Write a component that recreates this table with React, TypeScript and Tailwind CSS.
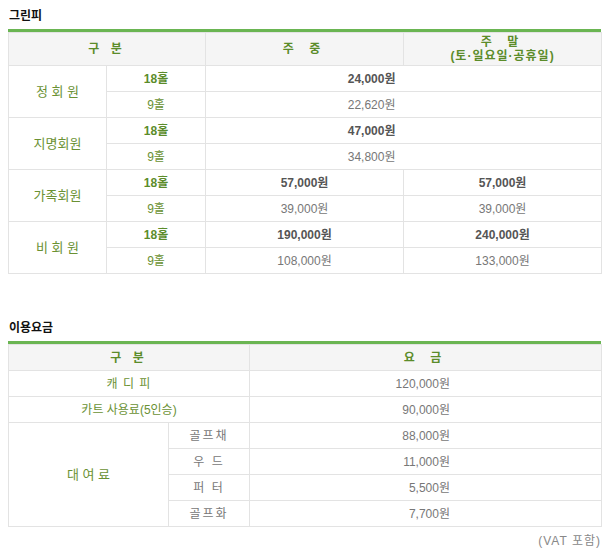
const font = "font-['Liberation_Sans','Noto_Sans_CJK_KR',sans-serif]"

const td = 'border border-[#e3e3e3] h-[26px] p-0 text-center align-middle text-[12px]'
const th = 'border border-[#e3e3e3] bg-[#f5f5f5] p-0 text-center align-middle text-[12px] font-bold text-[#5b8c2a]'
const label = 'text-[#6a9133] text-[13px]'
const hole18 = 'font-bold text-[#5b8c2a]'
const hole9 = 'text-[#6a9133]'
const priceB = 'font-bold text-[#555]'
const price = 'text-[#777]'

const greenFee = [
  { name: '정 회 원', wd: ['24,000원', '22,620원'], we: null },
  { name: '지명회원', wd: ['47,000원', '34,800원'], we: null },
  { name: '가족회원', wd: ['57,000원', '39,000원'], we: ['57,000원', '39,000원'] },
  { name: '비 회 원', wd: ['190,000원', '108,000원'], we: ['240,000원', '133,000원'] }
]

const rental = [
  ['골프채', '88,000원'],
  ['우 드', '11,000원'],
  ['퍼 터', '5,500원'],
  ['골프화', '7,700원']
]

function Title({ children }: { children: React.ReactNode }) {
  return (
    <div className="px-[1px] text-[12px] leading-[14px] font-bold text-[#111] mb-[6px]">
      {children}
    </div>
  )
}

export default function App() {
  return (
    <main className={`${font} w-[609px] h-[559px] bg-white px-2 pt-[9px]`}>
      <Title>그린피</Title>
      <div className="h-[3px] bg-[#6ab552]" />
      <table className="w-[593px] table-fixed border-collapse">
        <colgroup>
          <col className="w-[98px]" />
          <col className="w-[99px]" />
          <col className="w-[198px]" />
          <col className="w-[198px]" />
        </colgroup>
        <thead>
          <tr>
            <th colSpan={2} className={`${th} h-[33px] tracking-[4px]`}>구 분</th>
            <th className={`${th} tracking-[6px]`}>주 중</th>
            <th className={`${th} leading-[14px]`}>
              <span className="tracking-[6px]">주 말</span>
              <br />
              <span className="tracking-[1px]">(토·일요일·공휴일)</span>
            </th>
          </tr>
        </thead>
        <tbody>
          {greenFee.map(r => (
            <>
              <tr key={r.name}>
                <td rowSpan={2} className={`${td} ${label}`}>{r.name}</td>
                <td className={`${td} ${hole18}`}>18홀</td>
                {r.we ? (
                  <>
                    <td className={`${td} ${priceB}`}>{r.wd[0]}</td>
                    <td className={`${td} ${priceB}`}>{r.we[0]}</td>
                  </>
                ) : (
                  <>
                    <td className={`${td} ${priceB} border-r-0 text-right pr-[8px]`}>{r.wd[0]}</td>
                    <td className={`${td} border-l-0`} />
                  </>
                )}
              </tr>
              <tr key={r.name + '9'}>
                <td className={`${td} ${hole9}`}>9홀</td>
                {r.we ? (
                  <>
                    <td className={`${td} ${price}`}>{r.wd[1]}</td>
                    <td className={`${td} ${price}`}>{r.we[1]}</td>
                  </>
                ) : (
                  <>
                    <td className={`${td} ${price} border-r-0 text-right pr-[8px]`}>{r.wd[1]}</td>
                    <td className={`${td} border-l-0`} />
                  </>
                )}
              </tr>
            </>
          ))}
        </tbody>
      </table>

      <div className="h-[47px]" />
      <Title>이용요금</Title>
      <div className="h-[3px] bg-[#6ab552]" />
      <table className="w-[593px] table-fixed border-collapse">
        <colgroup>
          <col className="w-[160px]" />
          <col className="w-[81px]" />
          <col className="w-[352px]" />
        </colgroup>
        <thead>
          <tr>
            <th colSpan={2} className={`${th} h-[26px] tracking-[4px]`}>구 분</th>
            <th className={`${th} tracking-[6px]`}>요 금</th>
          </tr>
        </thead>
        <tbody>
          <tr>
            <td colSpan={2} className={`${td} text-[#6a9133] tracking-[1px]`}>캐 디 피</td>
            <td className={`${td} ${price} text-right pr-[151px]`}>120,000원</td>
          </tr>
          <tr>
            <td colSpan={2} className={`${td} text-[#6a9133]`}>카트 사용료(5인승)</td>
            <td className={`${td} ${price} text-right pr-[151px]`}>90,000원</td>
          </tr>
          {rental.map(([n, p], i) => (
            <tr key={n}>
              {i === 0 && (
                <td rowSpan={4} className={`${td} ${label}`}>대 여 료</td>
              )}
              <td className={`${td} text-[#777] tracking-[2px]`}>{n}</td>
              <td className={`${td} ${price} text-right pr-[151px]`}>{p}</td>
            </tr>
          ))}
        </tbody>
      </table>
      <div className="text-right text-[12px] text-[#888] mt-[5px] tracking-[1px]">(VAT 포함)</div>
    </main>
  )
}
